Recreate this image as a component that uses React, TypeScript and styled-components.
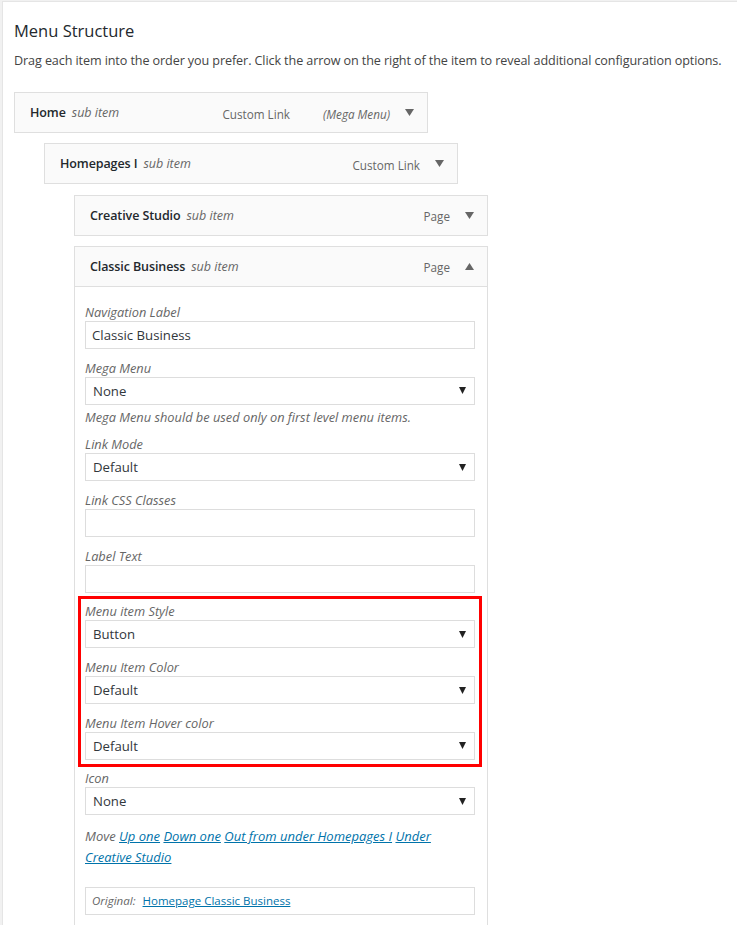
import React from 'react'
import styled, { createGlobalStyle } from 'styled-components'

const GlobalStyle = createGlobalStyle`
  html, body {
    margin: 0;
    padding: 0;
    background: #f1f1f1;
  }
  body {
    font-family: "Open Sans", "Noto Sans", sans-serif;
    color: #444;
  }
`

export const Page = styled('div')`
  background: #fff;
  border-left: 1px solid #e5e5e5;
  border-top: 1px solid #e5e5e5;
  margin: 1px 0 0 2px;
  min-height: 924px;
  padding: 0 0 0 11px;
`

export const Heading = styled('h3')`
  color: #23282d;
  font-size: 16.5px;
  font-weight: 400;
  line-height: 22px;
  margin: 0;
  padding-top: 18px;
`

export const Intro = styled('p')`
  color: #444;
  font-size: 12.6px;
  letter-spacing: -0.1px;
  line-height: 20px;
  margin: 9px 0 0;
  white-space: nowrap;
`

export const MenuList = styled('div')`
  display: flex;
  flex-direction: column;
  gap: 10.3px;
  margin-top: 21px;
`

interface IDepth {
  depth: number
}

export const MenuItem = styled('div')<IDepth>`
  margin-left: ${(props) => props.depth * 30}px;
  width: 414px;
`

export const ItemBar = styled('div')`
  align-items: center;
  background: #fafafa;
  border: 1px solid #dfdfdf;
  box-sizing: border-box;
  display: flex;
  height: 41px;
  padding: 0 13px 0 15px;
`

export const ItemTitle = styled('span')`
  color: #23282d;
  font-size: 12.5px;
  font-weight: 600;
  letter-spacing: -0.1px;
`

export const SubItem = styled('span')`
  color: #666;
  font-size: 12.5px;
  font-style: italic;
  margin-left: 6px;
`

export const ItemControls = styled('div')`
  align-items: center;
  display: flex;
  gap: 15px;
  margin-left: auto;
`

export const ItemType = styled('span')`
  color: #666;
  font-size: 11.7px;
`

export const MegaNote = styled(ItemType)`
  font-style: italic;
  margin-left: 33px;
`

export const ToggleArrow = styled('svg')`
  display: block;
  fill: #666;
  height: 7px;
  width: 9px;
`

export const Settings = styled('div')`
  border: 1px solid #dfdfdf;
  border-top: none;
  box-sizing: border-box;
  display: flex;
  flex-direction: column;
  gap: 9.7px;
  min-height: 640px;
  padding: 16px 12px 20px 10px;
`

export const FieldGroup = styled('div')`
  display: flex;
  flex-direction: column;
  gap: 9.7px;
  position: relative;
  &::after {
    border: 3px solid #f00;
    bottom: -7px;
    content: '';
    left: -7px;
    pointer-events: none;
    position: absolute;
    right: -7px;
    top: -6px;
  }
`

export const Field = styled('div')`
  display: flex;
  flex-direction: column;
`

export const FieldLabel = styled('label')`
  color: #666;
  font-size: 12.8px;
  font-style: italic;
  line-height: 18px;
`

export const TextBox = styled('div')`
  align-items: center;
  background: #fff;
  border: 1px solid #ddd;
  box-sizing: border-box;
  color: #32373c;
  display: flex;
  font-size: 13.2px;
  height: 28px;
  padding: 0 6px;
  width: 390px;
`

export const SelectBox = styled(TextBox)`
  padding: 0 8px 0 7px;
  justify-content: space-between;
`

export const SelectArrow = styled('svg')`
  display: block;
  fill: #222;
  height: 7px;
  width: 7px;
`

export const HelpText = styled('span')`
  color: #666;
  font-size: 12.8px;
  font-style: italic;
  line-height: 18px;
  margin-top: 3px;
`

export const MoveText = styled('div')`
  color: #666;
  font-size: 13px;
  font-style: italic;
  line-height: 21px;
  margin-top: 1px;
  width: 360px;
`

export const MoveLink = styled('a')`
  color: #0073aa;
  text-decoration: underline;
`

export const OriginalBox = styled(TextBox)`
  color: #666;
  font-size: 11.5px;
  margin-top: 9px;
  padding: 0 6px;
`

export const OriginalLabel = styled('span')`
  font-style: italic;
`

export const OriginalLink = styled('a')`
  color: #0073aa;
  margin-left: 7px;
  text-decoration: underline;
`

const Arrow = ({ up }: { up?: boolean }) => (
  <ToggleArrow viewBox="0 0 9 7">
    {up ? <polygon points="0,7 9,7 4.5,0" /> : <polygon points="0,0 9,0 4.5,7" />}
  </ToggleArrow>
)

const Select = ({ value }: { value: string }) => (
  <SelectBox>
    <span>{value}</span>
    <SelectArrow viewBox="0 0 7 7">
      <polygon points="0,0 7,0 3.5,7" />
    </SelectArrow>
  </SelectBox>
)

interface IItem {
  title: string
  type: string
  depth: number
  mega?: boolean
}

const items: IItem[] = [
  { title: 'Home', type: 'Custom Link', depth: 0, mega: true },
  { title: 'Homepages I', type: 'Custom Link', depth: 1 },
  { title: 'Creative Studio', type: 'Page', depth: 2 },
]

const Bar = ({ item, open }: { item: IItem; open?: boolean }) => (
  <ItemBar>
    <ItemTitle>{item.title}</ItemTitle>
    <SubItem>sub item</SubItem>
    <ItemControls>
      <span>
        <ItemType>{item.type}</ItemType>
        {item.mega && <MegaNote>(Mega Menu)</MegaNote>}
      </span>
      <Arrow up={open} />
    </ItemControls>
  </ItemBar>
)

export default function App() {
  return (
    <>
      <GlobalStyle />
      <Page>
        <Heading>Menu Structure</Heading>
        <Intro>
          Drag each item into the order you prefer. Click the arrow on the right of the item to reveal additional
          configuration options.
        </Intro>
        <MenuList>
          {items.map((item) => (
            <MenuItem key={item.title} depth={item.depth}>
              <Bar item={item} />
            </MenuItem>
          ))}
          <MenuItem depth={2}>
            <Bar item={{ title: 'Classic Business', type: 'Page', depth: 2 }} open />
            <Settings>
              <Field>
                <FieldLabel>Navigation Label</FieldLabel>
                <TextBox>Classic Business</TextBox>
              </Field>
              <Field>
                <FieldLabel>Mega Menu</FieldLabel>
                <Select value="None" />
                <HelpText>Mega Menu should be used only on first level menu items.</HelpText>
              </Field>
              <Field>
                <FieldLabel>Link Mode</FieldLabel>
                <Select value="Default" />
              </Field>
              <Field>
                <FieldLabel>Link CSS Classes</FieldLabel>
                <TextBox />
              </Field>
              <Field>
                <FieldLabel>Label Text</FieldLabel>
                <TextBox />
              </Field>
              <FieldGroup>
                <Field>
                  <FieldLabel>Menu item Style</FieldLabel>
                  <Select value="Button" />
                </Field>
                <Field>
                  <FieldLabel>Menu Item Color</FieldLabel>
                  <Select value="Default" />
                </Field>
                <Field>
                  <FieldLabel>Menu Item Hover color</FieldLabel>
                  <Select value="Default" />
                </Field>
              </FieldGroup>
              <Field>
                <FieldLabel>Icon</FieldLabel>
                <Select value="None" />
              </Field>
              <MoveText>
                Move <MoveLink href="#">Up one</MoveLink> <MoveLink href="#">Down one</MoveLink>{' '}
                <MoveLink href="#">Out from under Homepages I</MoveLink> <MoveLink href="#">Under Creative Studio</MoveLink>
              </MoveText>
              <OriginalBox>
                <OriginalLabel>Original:</OriginalLabel>
                <OriginalLink href="#">Homepage Classic Business</OriginalLink>
              </OriginalBox>
            </Settings>
          </MenuItem>
        </MenuList>
      </Page>
    </>
  )
}
